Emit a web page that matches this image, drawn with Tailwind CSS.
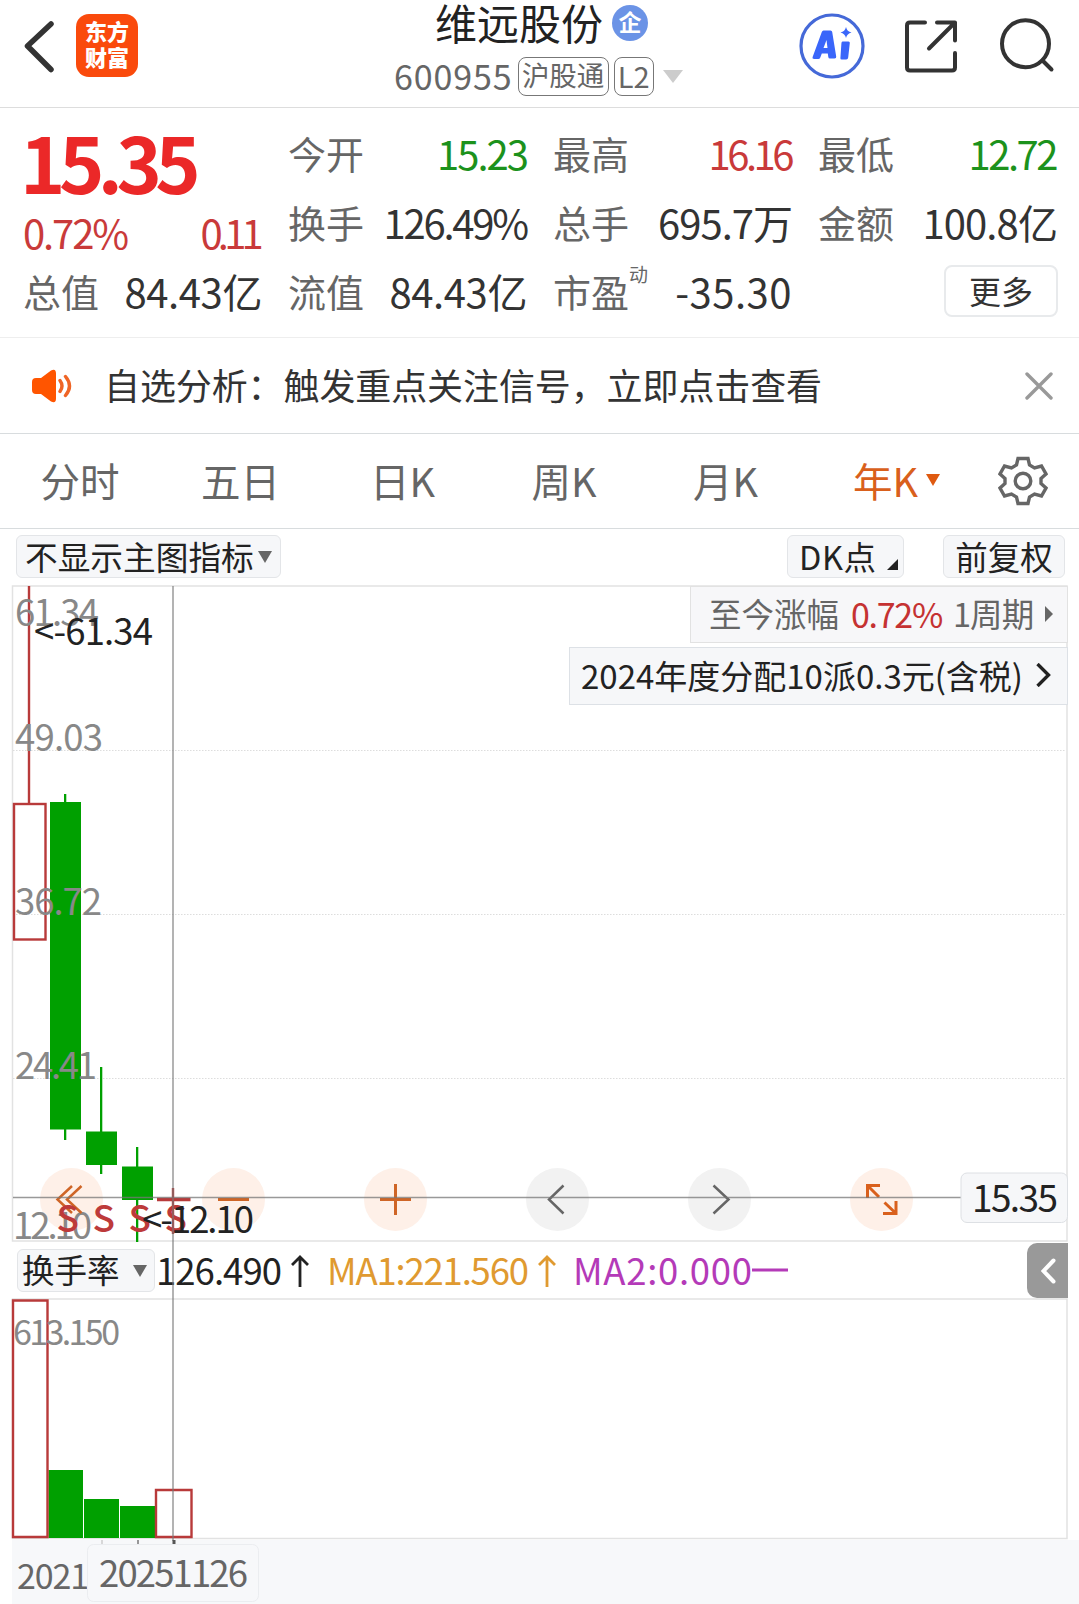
<!DOCTYPE html>
<html lang="zh-CN">
  <head>
    <meta charset="UTF-8" />
    <meta name="viewport" content="width=device-width, initial-scale=1.0" />
    <title>维远股份 600955</title>
    <script src="https://cdn.jsdelivr.net/npm/@tailwindcss/browser@4"></script>
  </head>
  <body class="w-[1079px] h-[1604px] overflow-hidden bg-white font-['Noto_Sans_CJK_SC',sans-serif] text-[#333] leading-none whitespace-nowrap">
    <!-- Header -->
    <header class="flex h-[108px] border-b border-[#ddd]">
      <div class="flex w-[394px] pl-[22px] pt-[14px]">
        <svg class="w-8 h-16 shrink-0" viewBox="0 0 32 64" fill="none" stroke="#333" stroke-width="5.5" stroke-linecap="round" stroke-linejoin="round">
          <path d="M29 10 5.500 32 29 55.500" />
        </svg>
        <div class="ml-[22px] flex h-[63px] w-[62px] flex-col items-center justify-center rounded-[13px] bg-[#fa4a0c] pb-[6px] text-[22px] font-black leading-[26px] text-white">
          <span>东方</span>
          <span>财富</span>
        </div>
      </div>
      <div class="w-[310px]">
        <div class="flex h-[46px] items-center pl-[41px]">
          <h1 class="pb-[3px] text-[42px] leading-[43px] text-[#222]">维远股份</h1>
          <span class="ml-[9px] flex size-9 items-center justify-center rounded-full bg-[#6b93e6] pb-[3px] text-[23px] font-bold text-white">企</span>
        </div>
        <div class="mt-[11px] flex h-[39px] items-center">
          <span class="pb-[2px] text-[34px] tracking-[0.900px] text-[#666]">600955</span>
          <span class="ml-[5px] flex h-[39px] w-[91px] items-center justify-center rounded-lg border border-[#777] pb-[3px] text-[27.500px] text-[#666]">沪股通</span>
          <span class="ml-[5px] flex h-[39px] w-10 items-center justify-center rounded-lg border border-[#777] pb-[3px] text-[29px] text-[#666]">L2</span>
          <svg class="ml-[9px] w-5 h-[13px]" viewBox="0 0 20 13" fill="#ccc"><path d="M0 0h20L10 13z" /></svg>
        </div>
      </div>
      <div class="flex pl-[95px] pt-[13px]">
        <svg class="size-[66px]" viewBox="0 0 66 66">
          <circle cx="33" cy="33" r="31" fill="none" stroke="#4569d8" stroke-width="3.200" />
          <path fill="#3a66fa" fill-rule="evenodd" d="M24 17.500h7.500q1.500 0 1.700 1.500l4 24.500q.3 2-1.700 2h-4.500q-1.500 0-1.700-1.500l-.5-3.500h-6l-1.500 4q-.6 1.500-2 1.500h-4q-2.500 0-1.500-2.500l9-24.500q.5-1.500 1.700-1.500zM27.500 27l-3 8h4z" />
          <path fill="#3a66fa" d="M43.500 28.500h6q1.500 0 1.300 1.500l-1.600 14.500q-.2 2-2 2h-4.500q-1.500 0-1.300-1.500l1-14.500q.1-2 1.100-2zM47 14q1 4.500 5.500 5.500-4.500 1-5.500 5.500-1-4.500-5.500-5.500 4.500-1 5.500-5.500z" />
        </svg>
        <svg class="ml-[39px] size-[60px]" viewBox="0 0 60 60" fill="none" stroke="#333" stroke-width="4" stroke-linecap="round" stroke-linejoin="round">
          <path d="M21 9.500H6q-3 0-3 3v42q0 3 3 3h42q3 0 3-3V40M33 9.500h18v18M51 9.500 25 35.500" />
        </svg>
        <svg class="ml-[32px] size-[60px]" viewBox="0 0 60 60" fill="none" stroke="#333" stroke-width="4" stroke-linecap="round">
          <circle cx="29.500" cy="30.700" r="23.500" />
          <path d="M46.500 47.500 55.500 56.500" />
        </svg>
      </div>
    </header>

    <!-- Quote -->
    <section class="grid h-[230px] grid-cols-[239px_239px_239px_240px] gap-x-[26px] border-b border-[#eee] pl-[23px]">
      <div class="pt-[15px]">
        <div class="-ml-[3px] h-[75px] text-[77px] font-bold leading-[75px] tracking-[-6.500px] text-[#eb2828]">15.35</div>
        <div class="mt-[9px] flex h-[50px] items-center justify-between text-[40px] text-[#c93a3a]">
          <span class="tracking-[-2.100px]">0.72%</span><span class="pr-[3px] tracking-[-4.800px]">0.11</span>
        </div>
        <div class="flex h-[68px] items-center justify-between">
          <span class="text-[38px] text-[#666]">总值</span><span class="text-[40px] tracking-[-0.400px]">84.43亿</span>
        </div>
      </div>
      <div class="pt-[10px]">
        <div class="flex h-[69px] items-center justify-between">
          <span class="text-[38px] text-[#666]">今开</span><span class="text-[40px] tracking-[-2px] text-[#1c921c]">15.23</span>
        </div>
        <div class="flex h-[69px] items-center justify-between">
          <span class="text-[38px] text-[#666]">换手</span><span class="text-[40px] tracking-[-2.200px]">126.49%</span>
        </div>
        <div class="flex h-[69px] items-center justify-between">
          <span class="text-[38px] text-[#666]">流值</span><span class="text-[40px] tracking-[-0.400px]">84.43亿</span>
        </div>
      </div>
      <div class="pt-[10px]">
        <div class="flex h-[69px] items-center justify-between">
          <span class="text-[38px] text-[#666]">最高</span><span class="pr-px text-[40px] tracking-[-3.500px] text-[#c93a3a]">16.16</span>
        </div>
        <div class="flex h-[69px] items-center justify-between">
          <span class="text-[38px] text-[#666]">总手</span><span class="text-[40px] tracking-[-1px]">695.7万</span>
        </div>
        <div class="flex h-[69px] items-center justify-between">
          <span class="flex text-[38px] text-[#666]">市盈<sup class="-mt-2 text-[19px] leading-none top-0">动</sup></span><span class="text-[40px] tracking-[0.500px]">-35.30</span>
        </div>
      </div>
      <div class="pt-[10px]">
        <div class="flex h-[69px] items-center justify-between">
          <span class="text-[38px] text-[#666]">最低</span><span class="pr-[2px] text-[40px] tracking-[-2.500px] text-[#1c921c]">12.72</span>
        </div>
        <div class="flex h-[69px] items-center justify-between">
          <span class="text-[38px] text-[#666]">金额</span><span class="pr-px text-[40px] tracking-[-0.900px]">100.8亿</span>
        </div>
        <div class="flex h-[69px] items-center justify-end">
          <button class="h-[52px] w-[114px] rounded-lg border-2 border-[#e8eaec] pb-[2px] text-[32px]">更多</button>
        </div>
      </div>
    </section>

    <!-- Notice -->
    <section class="flex h-24 items-center border-b border-[#d8dcde] pl-8">
      <svg class="w-10 h-[34px]" viewBox="0 0 40 34">
        <path fill="#ff5500" d="M0 13q0-4 4-4h5L19 1.500q5-2.500 5 3v25q0 5.500-5 3L9 25H4q-4 0-4-4z" />
        <path fill="none" stroke="#ef6425" stroke-width="3.400" stroke-linecap="round" d="M28 11.500q4 5.500 0 11M33.500 7.500q8 9.500 0 19" />
      </svg>
      <p class="ml-[32px] pb-[3px] text-[36px] tracking-[-0.100px]">自选分析：触发重点关注信号，立即点击查看</p>
      <svg class="ml-auto mr-[26px] size-7" viewBox="0 0 28 28" stroke="#999" stroke-width="3.400" stroke-linecap="round"><path d="m2 2 24 24M26 2 2 26" /></svg>
    </section>

    <!-- Period tabs -->
    <nav class="flex h-[95px] items-center border-b border-[#d8dcde] text-[39.500px] text-[#666]">
      <div class="flex items-center pb-[3px] text-center">
        <span class="w-[160px]">分时</span>
        <span class="w-[161px]">五日</span>
        <span class="w-[163px]">日K</span>
        <span class="w-[160px]">周K</span>
        <span class="w-[163px]">月K</span>
        <span class="flex items-center pl-[46px] text-[#d9601c]">年K<svg class="ml-[8px] w-[14px] h-3" viewBox="0 0 14 12" fill="#df5a10"><path d="M0 0h14L7 12z" /></svg></span>
      </div>
      <svg class="ml-auto mr-[31px] size-[50px]" viewBox="0 0 50 50" fill="none" stroke="#666" stroke-width="3.400">
        <circle cx="25" cy="25" r="7.800" />
        <path d="M20 2.500h10l1.500 6.500 5 3 7-2 4.500 8-5 4.500v5l5 4.500-4.500 8-7-2-5 3-1.500 6.500H20L18.500 41l-5-3-7 2L2 32l5-4.500v-5L2 18l4.500-8 7 2 5-3z" />
      </svg>
    </nav>

    <!-- Chart toolbar -->
    <div class="flex h-[56px] items-start pl-4 pr-[14px] pt-[6px] text-[#222]">
      <button class="flex h-[43px] w-[265px] items-center rounded-md border border-[#e3e5e8] bg-[#f6f7f9] pl-[8px] text-[32.700px] leading-none"><span class="pb-[1px]">不显示主图指标</span><svg class="ml-1 w-[14px] h-3" viewBox="0 0 14 12" fill="#666"><path d="M0 0h14L7 12z" /></svg></button>
      <button class="ml-auto flex h-[43px] w-[117px] items-center rounded-md border border-[#e3e5e8] bg-[#f6f7f9] pl-[11px] text-[32.500px] leading-none"><span class="pb-[1px] tracking-[0.600px]">DK点</span><svg class="ml-auto mr-[5px] mt-4 size-[11px]" viewBox="0 0 11 11" fill="#222"><path d="M11 0v11H0z" /></svg></button>
      <button class="ml-[39px] flex h-[43px] w-[122px] items-center justify-center rounded-md border border-[#e3e5e8] bg-[#f6f7f9] pb-[1px] text-[32.500px] leading-none">前复权</button>
    </div>

    <!-- Charts -->
    <main class="relative h-[1019px]">
      <svg class="block h-[1019px] w-[1079px]" viewBox="0 585 1079 1019">
        <!-- frames and grid -->
        <path d="M12.500 586H1067V1241H12.500zM12.500 1299H1067V1538.500H12.500z" fill="none" stroke="#e2e2e2" stroke-width="1.500" />
        <path d="M13 750.500H1066M13 914.500H1066M13 1078.500H1066" stroke="#ddd" stroke-dasharray="1.500 1.500" />
        <rect x="12" y="1540" width="1067" height="65" fill="#f7f8fa" />

        <!-- control discs -->
        <g fill="#fef0e8">
          <circle cx="71.500" cy="1199.500" r="31.500" />
          <circle cx="233.500" cy="1199.500" r="31.500" />
          <circle cx="395.500" cy="1199.500" r="31.500" />
          <circle cx="881.500" cy="1199.500" r="31.500" />
        </g>
        <g fill="#f2f2f2">
          <circle cx="557.500" cy="1199.500" r="31.500" />
          <circle cx="719.500" cy="1199.500" r="31.500" />
        </g>

        <!-- candles -->
        <g fill="none" stroke="#b83a3a" stroke-width="2.400">
          <path d="M29 586V803" />
          <rect x="14" y="804" width="31.500" height="135.500" />
          <path d="M173 1188V1234" />
          <path d="M157 1199.500H190.500" stroke-width="3.500" />
        </g>
        <g fill="#00a000">
          <path d="M50 802h31v327.500H50zM64 794h2.300v346H64z" />
          <path d="M86 1131.500h31v33.500H86zM100 1067h2.300v107H100z" />
          <path d="M122 1166.500h31v33.500h-31zM136 1147h2.300v95H136z" />
        </g>

        <!-- turnover bars -->
        <g fill="#00a000">
          <path d="M48.500 1470H83v68H48.500zM84 1499h35v39H84zM120 1506h35v32h-35z" />
        </g>
        <g fill="none" stroke="#b83a3a" stroke-width="2.400">
          <path d="M13 1300.500H47.500V1537H13z" />
          <path d="M156 1490H191.500V1537H156z" />
        </g>

        <!-- scale labels -->
        <g font-size="36.500" fill="#888">
          <text x="15" y="625.500" textLength="84">61.34</text>
          <text x="15" y="750.500" textLength="88">49.03</text>
          <text x="15" y="914.500" textLength="87">36.72</text>
          <text x="15" y="1078.500" textLength="82">24.41</text>
          <text x="13" y="1239" textLength="79">12.10</text>
          <text x="13" y="1345" font-size="34" textLength="107">613.150</text>
        </g>

        <!-- control glyphs -->
        <g fill="none" stroke="#cf6526" stroke-width="2.500">
          <path d="M72 1186 57.500 1199.500 72 1213M81.500 1186 67 1199.500 81.500 1213" />
          <path d="M218 1199.500H249M380 1199.500H411M395.500 1184V1215" stroke-width="3" />
          <path d="M867.500 1198V1185.500H880M867.500 1185.500 879 1197M883 1213.500H896V1201M896 1213.500 884.500 1202.500" stroke-width="3" stroke="#d9601c" />
        </g>
        <path d="M563.500 1185.500 549 1199.500 563.500 1213.500M713.500 1185.500 728.500 1199.500 713.500 1213.500" fill="none" stroke="#666" stroke-width="2.500" />

        <!-- sell marks -->
        <g font-size="37" font-weight="500" fill="#bd3a3a">
          <text x="56.500" y="1232">S</text>
          <text x="92.500" y="1232">S</text>
          <text x="128.500" y="1232">S</text>
          <text x="164.500" y="1232">S</text>
        </g>

        <!-- high and low -->
        <g font-size="36.500" fill="#222">
          <text x="34" y="644.500" textLength="119">&lt;-61.34</text>
          <text x="142" y="1233" textLength="112">&lt;-12.10</text>
        </g>

        <!-- indicator values -->
        <g font-size="36.500">
          <text x="156" y="1285" textLength="126" fill="#222">126.490</text>
          <text x="327" y="1285" textLength="202" fill="#e09a30">MA1:221.560</text>
          <text x="573" y="1285" textLength="179" fill="#b43ab8">MA2:0.000</text>
        </g>
        <g fill="none" stroke-width="2.800">
          <path d="M300 1287V1257M292 1265 300 1257 308 1265" stroke="#222" />
          <path d="M547 1287V1257M539 1265 547 1257 555 1265" stroke="#e09a30" />
          <path d="M752 1270H788" stroke="#b43ab8" />
        </g>

        <!-- crosshair -->
        <path d="M13 1197.500H961M173 586V1541" stroke="#777" stroke-opacity=".75" stroke-width="1.500" />
        <path d="M102 1540v4" stroke="#ccc" stroke-width="1.500" />
        <path d="M138 1540v4" stroke="#777" stroke-width="1.500" />
        <path d="M174 1540v4" stroke="#555" stroke-width="3" />
        <rect x="961" y="1173" width="106.500" height="49.500" rx="6" fill="#f6f7f9" stroke="#dde0e4" />
        <text x="972" y="1212" font-size="37" textLength="86" fill="#222">15.35</text>

        <!-- dates -->
        <text x="17" y="1589" font-size="34" textLength="72" fill="#666">2021</text>
        <rect x="87.500" y="1544.500" width="171" height="57" rx="6" fill="#f7f8fa" stroke="#ebedf0" />
        <text x="99" y="1587" font-size="36.500" textLength="149" fill="#666">20251126</text>
      </svg>

      <!-- overlays on the plot -->
      <div class="absolute right-[11px] top-[1px] flex h-[57px] w-[378px] items-center border border-[#e2e2e2] bg-[#f7f7f9] pb-[2px] pl-[18px] text-[32.500px] text-[#666]">
        至今涨幅<span class="ml-3 text-[34px] tracking-[-1.300px] text-[#c53232]">0.72%</span><span class="ml-[11px] tracking-[-0.900px]">1周期</span>
        <svg class="ml-3 w-2 h-4" viewBox="0 0 8 16" fill="#666"><path d="m0 0 8 8-8 8z" /></svg>
      </div>
      <div class="absolute right-[11px] top-[62px] flex h-[58px] w-[499px] items-center border border-[#dde1e6] bg-[#f6f7f9] pb-[2px] pl-[11px] text-[33px] text-[#222]">
        <span>2024年度分配10派0.3元(含税)</span>
        <svg class="ml-auto mr-4 w-[15px] h-6" viewBox="0 0 15 24" fill="none" stroke="#222" stroke-width="3.400"><path d="m1.500 1 11 11-11 11" /></svg>
      </div>
      <button class="absolute left-[17px] top-[664px] flex h-[43px] w-[138px] items-center rounded-md border border-[#e3e5e8] bg-[#f6f7f9] pl-1 text-[32.500px] leading-none text-[#222]"><span class="pb-[2px]">换手率</span><svg class="ml-[13px] w-[14px] h-3" viewBox="0 0 14 12" fill="#666"><path d="M0 0h14L7 12z" /></svg></button>
      <button class="absolute right-[11px] top-[658px] flex h-[55px] w-[41px] items-center rounded-l-[10px] bg-[#999] pl-[14px]">
        <svg class="w-[15px] h-[26px]" viewBox="0 0 15 26" fill="none" stroke="#fff" stroke-width="4" stroke-linecap="round"><path d="M12.500 2.500 2.500 13l10 10.500" /></svg>
      </button>
      <div class="ml-3 h-px bg-[#f7f8fa]"></div>
    </main>
  </body>
</html>
